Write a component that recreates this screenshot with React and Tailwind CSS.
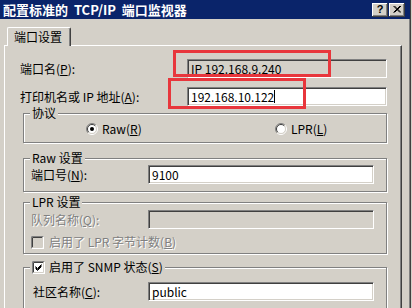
import React from "react";

// Windows 2000 style "Configure Standard TCP/IP Port Monitor" dialog

const M = ({ k }) => (
  <>
    (<u>{k}</u>)
  </>
);

const Field = ({ children, gray = false, className = "" }) => (
  <div
    className={`h-[19px] border border-t-[#808080] border-l-[#808080] border-b-white border-r-white shadow-[inset_1px_1px_0_#404040,inset_-1px_-1px_0_#d4d0c8] flex items-center pl-[3px] whitespace-pre ${
      gray ? "bg-[#d4d0c8]" : "bg-white"
    } ${className}`}
  >
    {children}
  </div>
);

const Radio = ({ checked }) => (
  <svg width="12" height="12" viewBox="0 0 12 12" className="shrink-0">
    <circle cx="6" cy="6" r="4.5" fill="#fff" />
    <path d="M2.1 9.9 A5.5 5.5 0 0 1 9.9 2.1" fill="none" stroke="#808080" />
    <path d="M2.8 9.2 A4.5 4.5 0 0 1 9.2 2.8" fill="none" stroke="#404040" />
    <path d="M9.9 2.1 A5.5 5.5 0 0 1 2.1 9.9" fill="none" stroke="#fff" />
    <path d="M9.2 2.8 A4.5 4.5 0 0 1 2.8 9.2" fill="none" stroke="#d4d0c8" />
    {checked && <circle cx="6" cy="6" r="2" fill="#000" />}
  </svg>
);

const Check = ({ checked, disabled }) => (
  <svg width="13" height="13" viewBox="0 0 13 13" className="shrink-0">
    <rect x="0" y="0" width="13" height="13" fill="#fff" />
    <rect x="2" y="2" width="9" height="9" fill={disabled ? "#d4d0c8" : "#fff"} />
    <path d="M0.5 12.5 V0.5 H12.5" fill="none" stroke="#808080" />
    <path d="M1.5 11.5 V1.5 H11.5" fill="none" stroke="#404040" />
    <path d="M1.5 11.5 H11.5 V1.5" fill="none" stroke="#d4d0c8" />
    {checked && (
      <path d="M3.5 5.5 L5.5 7.5 L9.5 3.5 M3.5 6.5 L5.5 8.5 L9.5 4.5 M3.5 7.5 L5.5 9.5 L9.5 5.5" fill="none" stroke="#000" />
    )}
  </svg>
);

const Group = ({ legend, className = "", children }) => (
  <fieldset
    className={`border border-[#808080] shadow-[inset_1px_1px_0_#fff,1px_1px_0_#fff] ${className}`}
  >
    <legend className="ml-[6px] px-[2px] bg-[#d4d0c8] leading-[14px] whitespace-pre">{legend}</legend>
    {children}
  </fieldset>
);

const disabledText = "text-[#808080] [text-shadow:1px_1px_0_#fff]";

export default function App() {
  return (
    <div className="relative w-[412px] h-[308px] overflow-hidden bg-[#d4d0c8] font-['Noto_Sans_CJK_SC',sans-serif] text-[12px] text-black">
      <div className="w-[411px] h-full border-r border-[#404040] shadow-[inset_-1px_0_0_#808080] flex flex-col">
        {/* Title bar */}
        <div className="h-[19px] shrink-0 bg-[#0a246a] flex items-center pl-[3px] pr-[5px]">
          <span className="text-white font-bold text-[13px] leading-none whitespace-pre">配置标准的  TCP/IP  端口监视器</span>
          <div className="ml-auto flex gap-[1px]">
            <div className="w-[16px] h-[14px] bg-[#d4d0c8] shadow-[inset_-1px_-1px_0_#404040,inset_1px_1px_0_#fff,inset_-2px_-2px_0_#808080] flex items-center justify-center font-['Liberation_Sans',sans-serif] font-bold text-[11px] leading-none">
              ?
            </div>
            <div className="w-[16px] h-[14px] bg-[#d4d0c8] shadow-[inset_-1px_-1px_0_#404040,inset_1px_1px_0_#fff,inset_-2px_-2px_0_#808080] flex items-center justify-center">
              <svg width="8" height="7" viewBox="0 0 8 7">
                <path d="M0.5 0 L7 6.5 M1.5 0 L8 6.5 M7 0 L0.5 6.5 M8 0 L1.5 6.5" stroke="#000" strokeWidth="1" fill="none" />
              </svg>
            </div>
          </div>
        </div>

        {/* Body */}
        <div className="flex-1 flex flex-col pl-[4px] pr-[8px] pt-[8px]">
          {/* Tab */}
          <div className="relative z-10 -mb-[1px] ml-[3px] w-[64px] h-[19px] bg-[#d4d0c8] border-t border-l border-white border-r border-r-[#404040] shadow-[inset_-1px_0_0_#808080] rounded-t-[2px] flex items-center pl-[6px]">
            端口设置
          </div>

          {/* Panel */}
          <div className="flex-1 border-t border-l border-white border-r border-r-[#404040] shadow-[inset_-1px_0_0_#808080] pt-[13px] pl-[15px]">
            <div className="flex items-center">
              <span className="w-[167px]">
                端口名<M k="P" />:
              </span>
              <Field gray className="w-[200px]">IP 192.168.9.240</Field>
            </div>
            <div className="flex items-center mt-[9px]">
              <span className="w-[167px] whitespace-pre">
                打印机名或 IP 地址<M k="A" />:
              </span>
              <Field className="w-[200px]">
                192.168.10.122<span className="inline-block w-[1px] h-[13px] bg-black" />
              </Field>
            </div>

            <div className="ml-[3px] w-[364px]">
              <Group legend="协议">
                <div className="h-[18px] mb-[4px] flex items-center pl-[62px]">
                  <div className="w-[189px] flex items-center gap-[4px]">
                    <Radio checked />
                    <span>
                      Raw<M k="R" />
                    </span>
                  </div>
                  <div className="flex items-center gap-[4px]">
                    <Radio />
                    <span>
                      LPR<M k="L" />
                    </span>
                  </div>
                </div>
              </Group>

              <Group legend="Raw 设置" className="mt-[8px]">
                <div className="flex items-center pl-[7px] pb-[7px]">
                  <span className="w-[117px]">
                    端口号<M k="N" />:
                  </span>
                  <Field className="w-[226px]">9100</Field>
                </div>
              </Group>

              <Group legend="LPR 设置" className="mt-[3px]">
                <div className="pl-[7px] pt-[1px] pb-[4px]">
                  <div className="flex items-center">
                    <span className={`w-[117px] ${disabledText}`}>
                      队列名称<M k="Q" />:
                    </span>
                    <Field gray className="w-[226px]" />
                  </div>
                  <div className="mt-[6px] h-[14px] flex items-center gap-[5px]">
                    <Check disabled />
                    <span className={`whitespace-pre ${disabledText}`}>
                      启用了 LPR 字节计数<M k="B" />
                    </span>
                  </div>
                </div>
              </Group>

              <Group
                className="mt-[6px]"
                legend={
                  <span className="flex items-center gap-[4px]">
                    <Check checked />
                    <span className="whitespace-pre">
                      启用了 SNMP 状态<M k="S" />
                    </span>
                  </span>
                }
              >
                <div className="flex items-center pl-[9px] pt-[8px] pb-[8px]">
                  <span className="w-[115px]">
                    社区名称<M k="C" />:
                  </span>
                  <Field className="w-[226px]">public</Field>
                </div>
              </Group>
            </div>
          </div>
        </div>
      </div>

      {/* Red annotation boxes */}
      <div className="absolute left-[173px] top-[50px] w-[158px] h-[27px] border-[3px] border-[#e8363c]" />
      <div className="absolute left-[168px] top-[78px] w-[138px] h-[31px] border-[3px] border-[#e8363c]" />
    </div>
  );
}
